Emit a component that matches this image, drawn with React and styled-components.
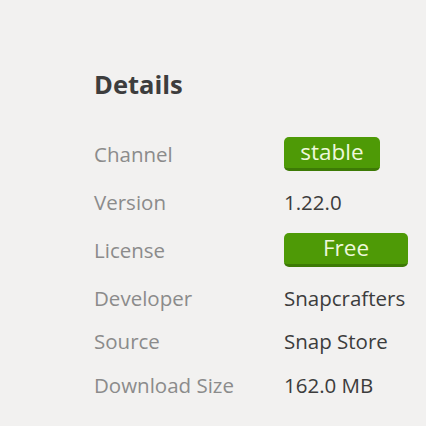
import React from 'react'
import styled, { createGlobalStyle } from 'styled-components'

const GlobalStyle = createGlobalStyle`
	html, body {
		margin: 0;
		padding: 0;
		background: #f2f1f0;
	}
	body {
		font-family: 'Open Sans', 'Noto Sans', sans-serif;
	}
`

const Page = styled.div`
	width: 426px;
	height: 426px;
	box-sizing: border-box;
	padding: 67px 0 0 94px;
	background: #f2f1f0;
	overflow: hidden;
`

const Title = styled.h2`
	margin: 0 0 36px 0;
	font-size: 25.5px;
	line-height: 34px;
	font-weight: 700;
	color: #3d3d3d;
`

const Grid = styled.div`
	display: grid;
	grid-template-columns: 190px auto;
	row-gap: 18.6px;
	align-items: center;
`

const Label = styled.div`
	font-size: 20.5px;
	line-height: 25px;
	color: #8b8b8b;
	white-space: nowrap;
`

const Value = styled.div`
	font-size: 20.5px;
	line-height: 25px;
	color: #3c3c3c;
	white-space: nowrap;
`

const Badge = styled.div`
	box-sizing: border-box;
	width: ${(props) => props.width}px;
	height: 34px;
	padding-bottom: 3px;
	display: flex;
	align-items: center;
	justify-content: center;
	background: #4e9a06;
	border-radius: 5px;
	border-bottom: 3px solid #3d7a05;
	color: #eef8dc;
	font-size: 22.5px;
`

const details = [
	{ label: 'Channel', badge: 'stable', width: 96 },
	{ label: 'Version', value: '1.22.0' },
	{ label: 'License', badge: 'Free', width: 124 },
	{ label: 'Developer', value: 'Snapcrafters' },
	{ label: 'Source', value: 'Snap Store' },
	{ label: 'Download Size', value: '162.0 MB' },
]

const App = () => {
	return (
		<Page>
			<GlobalStyle />
			<Title>Details</Title>
			<Grid>
				{details.map((row) => (
					<React.Fragment key={row.label}>
						<Label>{row.label}</Label>
						{row.badge ? (
							<div>
								<Badge width={row.width}>{row.badge}</Badge>
							</div>
						) : (
							<Value>{row.value}</Value>
						)}
					</React.Fragment>
				))}
			</Grid>
		</Page>
	)
}

export default App
